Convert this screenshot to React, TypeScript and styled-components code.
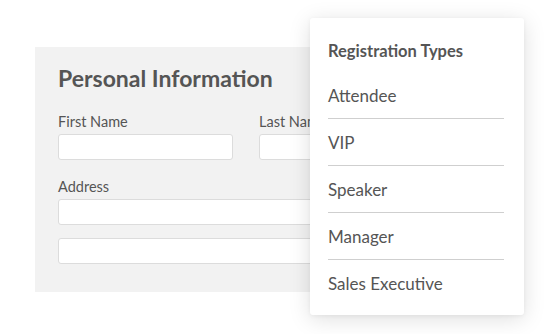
import React from "react";
import styled, { createGlobalStyle } from "styled-components";

const GlobalStyle = createGlobalStyle`
  html, body {
    margin: 0;
    padding: 0;
    background: #ffffff;
  }
  body {
    font-family: Lato, "Open Sans", "Liberation Sans", sans-serif;
    color: #555555;
  }
`;

const Stage = styled.div`
  position: relative;
  width: 560px;
  height: 334px;
  overflow: hidden;
  background: #ffffff;
`;

const Panel = styled.section`
  box-sizing: border-box;
  margin: 47px 0 0 35px;
  width: 422px;
  height: 245px;
  padding: 16px 23px 0 23px;
  background: #f2f2f2;
`;

const Title = styled.h2`
  margin: 0 0 20px;
  font-size: 23px;
  line-height: 30px;
  font-weight: 700;
  color: #555555;
`;

const FieldRow = styled.div`
  display: flex;
  gap: 26px;
  margin-bottom: 18px;
`;

const Field = styled.div<{ $width?: number }>`
  display: flex;
  flex-direction: column;
  width: ${(p) => (p.$width ? `${p.$width}px` : "100%")};
`;

const Label = styled.label`
  font-size: 14.5px;
  line-height: 18px;
  color: #555555;
  margin-bottom: 3px;
`;

const Input = styled.div<{ $gap?: number }>`
  box-sizing: border-box;
  height: 26px;
  background: #ffffff;
  border: 1px solid #dcdcdc;
  border-radius: 3px;
  margin-bottom: ${(p) => p.$gap ?? 0}px;
`;

const Dropdown = styled.div`
  position: absolute;
  left: 310px;
  top: 18px;
  box-sizing: border-box;
  width: 214px;
  height: 297px;
  padding: 23px 20px 7px 18px;
  background: #ffffff;
  border-radius: 3px;
  box-shadow: 0 4px 22px rgba(0, 0, 0, 0.13), 0 1px 4px rgba(0, 0, 0, 0.05);
`;

const DropdownHeader = styled.div`
  height: 31px;
  font-size: 16.5px;
  line-height: 20px;
  font-weight: 700;
  color: #555555;
`;

const Option = styled.div<{ $last?: boolean }>`
  height: 47px;
  line-height: 47px;
  font-size: 17px;
  color: #555555;
  border-bottom: ${(p) => (p.$last ? "none" : "1px solid #cfcfcf")};
  box-sizing: border-box;
`;

const options = ["Attendee", "VIP", "Speaker", "Manager", "Sales Executive"];

export default function App() {
  return (
    <Stage>
      <GlobalStyle />
      <Panel>
        <Title>Personal Information</Title>
        <FieldRow>
          <Field $width={175}>
            <Label>First Name</Label>
            <Input />
          </Field>
          <Field $width={175}>
            <Label>Last Name</Label>
            <Input />
          </Field>
        </FieldRow>
        <Field>
          <Label>Address</Label>
          <Input $gap={13} />
          <Input />
        </Field>
      </Panel>
      <Dropdown>
        <DropdownHeader>Registration Types</DropdownHeader>
        {options.map((o, i) => (
          <Option key={o} $last={i === options.length - 1}>
            {o}
          </Option>
        ))}
      </Dropdown>
    </Stage>
  );
}
